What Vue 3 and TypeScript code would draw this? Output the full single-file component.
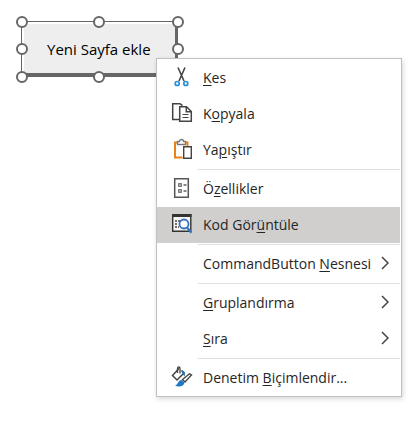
<script setup lang="ts">
type IconName = 'cut' | 'copy' | 'paste' | 'properties' | 'code' | 'format'

interface MenuItem {
  before: string
  key: string
  after: string
  icon?: IconName
  submenu?: boolean
  active?: boolean
}

const groups: MenuItem[][] = [
  [
    { before: '', key: 'K', after: 'es', icon: 'cut' },
    { before: 'K', key: 'o', after: 'pyala', icon: 'copy' },
    { before: 'Ya', key: 'p', after: 'ıştır', icon: 'paste' },
  ],
  [
    { before: 'Ö', key: 'z', after: 'ellikler', icon: 'properties' },
    { before: 'Kod Gör', key: 'ü', after: 'ntüle', icon: 'code', active: true },
  ],
  [{ before: 'CommandButton ', key: 'N', after: 'esnesi', submenu: true }],
  [
    { before: '', key: 'G', after: 'ruplandırma', submenu: true },
    { before: '', key: 'S', after: 'ıra', submenu: true },
  ],
  [{ before: 'Denetim ', key: 'B', after: 'içimlendir...', icon: 'format' }],
]

const handles: string[] = ['nw', 'n', 'ne', 'w', 'e', 'sw', 's', 'se']
</script>

<template>
  <main class="sheet">
    <div class="selection">
      <button type="button" class="command">Yeni Sayfa ekle</button>
      <span v-for="h in handles" :key="h" class="handle" :class="h"></span>
    </div>
    <div class="menu" role="menu">
      <div v-for="(group, g) in groups" :key="g" class="group" role="group">
        <button
          v-for="item in group"
          :key="item.before + item.key + item.after"
          type="button"
          role="menuitem"
          class="item"
          :class="{ active: item.active }"
          :aria-haspopup="item.submenu ? 'menu' : undefined"
        >
          <span class="icon">
            <svg v-if="item.icon" width="22" height="22" viewBox="0 0 22 22" fill="none" aria-hidden="true">
              <g v-if="item.icon === 'cut'">
                <path d="M7 1.500L13 15M14 1.500L8 15" stroke="#444" stroke-width="1.600" />
                <circle cx="6.200" cy="17.500" r="2" stroke="#2b8fd6" stroke-width="1.700" />
                <circle cx="14.800" cy="17.500" r="2" stroke="#2b8fd6" stroke-width="1.700" />
              </g>
              <g v-else-if="item.icon === 'copy'" stroke="#444" stroke-width="1.500">
                <path d="M8.500 17.500H1.700V1.700H9L11.500 3.700" />
                <path d="M8.700 4.700H15.500L20.300 9.500V19.300H8.700Z" fill="#fff" />
                <path d="M15.300 4.700V9.700H20.300" />
                <path d="M11.500 12.500H17.500M11.500 15.500H17.500" stroke-width="1.200" />
              </g>
              <g v-else-if="item.icon === 'paste'">
                <path d="M7 4.500H4V19.500H11.500M13 4.500H16.500V8" stroke="#e8811a" stroke-width="2" />
                <path d="M6.500 6.500V3.500H8.500C8.500 0.800 12.500 0.800 12.500 3.500H14.500V6.500Z" fill="#fff" stroke="#777" stroke-width="1.300" />
                <path d="M12.700 8.700H20.300V20.300H12.700Z" fill="#fff" stroke="#444" stroke-width="1.400" />
              </g>
              <g v-else-if="item.icon === 'properties'">
                <path d="M3.700 1.700H17.300V20.300H3.700Z" fill="#fff" stroke="#555" stroke-width="1.500" />
                <path d="M7.500 6.500H10.500V9.500H7.500ZM7.500 12.500H10.500V15.500H7.500Z" fill="#aaa" stroke="#777" />
                <path d="M12.500 8H15.500M12.500 14H15.500" stroke="#888" stroke-width="2" />
              </g>
              <g v-else-if="item.icon === 'code'">
                <path d="M1.700 1.700H19.800V18.300H1.700Z" fill="#f4f4f4" stroke="#333" stroke-width="1.400" />
                <path d="M1 2.500H20.500" stroke="#333" stroke-width="3" />
                <path d="M4 8H6M7 8H9M4 11H6M4 14H6M7 14H8" stroke="#444" stroke-width="1.500" />
                <path d="M16 14.500L20.500 19.700" stroke="#3574bd" stroke-width="2.200" />
                <circle cx="13" cy="11" r="4.500" fill="#fff" stroke="#3574bd" stroke-width="1.800" />
              </g>
              <g v-else>
                <path d="M8 2.500L1.500 9.500L6 14L13 7L10.500 4.500" fill="#fff" stroke="#444" stroke-width="1.500" />
                <path d="M6.500 7V2.500C6.500 0.500 9 0.500 9 2.500V7.500" stroke="#444" stroke-width="1.300" />
                <path d="M10.500 4.500C13.500 4.500 14.500 7 13.500 10.500L11.500 7.500Z" fill="#1e70b8" />
                <path d="M11.500 13.500L18.500 7.800L20.500 9L14 16Z" fill="#fff" stroke="#444" stroke-width="1.400" />
                <path d="M10.500 14L13.500 16.500C13 20 8.500 21.500 4 19.700C7.500 18.500 6.500 14.500 10.500 14Z" fill="#1e78c8" />
              </g>
            </svg>
          </span>
          <span class="label">{{ item.before }}<u>{{ item.key }}</u>{{ item.after }}</span>
          <svg v-if="item.submenu" class="chevron" width="8" height="14" viewBox="0 0 8 14" fill="none" aria-hidden="true">
            <path d="M1 1L7 7L1 13" stroke="#444" stroke-width="1.500" />
          </svg>
        </button>
      </div>
    </div>
  </main>
</template>

<style>
body {
  background: #fff;
}
</style>

<style scoped>
.sheet {
  position: relative;
  min-height: 100vh;
  box-sizing: border-box;
  padding: 21px;
  font-family: "Open Sans", "Noto Sans", sans-serif;
  color: #262626;
}

.selection {
  position: relative;
  width: fit-content;
}

.command {
  display: block;
  height: 56px;
  box-sizing: border-box;
  padding: 2px 24px 0 25px;
  border: solid #666;
  border-width: 1px 3px 4px 1px;
  background: #eee;
  box-shadow: inset 2px 2px #fff;
  font-family: "Open Sans", "Noto Sans", sans-serif;
  font-size: 15px;
  color: #000;
  white-space: nowrap;
}

.handle {
  position: absolute;
  width: 12px;
  height: 12px;
  box-sizing: border-box;
  border: 2px solid #666;
  border-radius: 50%;
  background: #fff;
  transform: translate(-50%, -50%);
}

.nw, .n, .ne { top: 1px; }
.w, .e { top: 50%; }
.sw, .s, .se { top: 100%; }
.nw, .w, .sw { left: 1px; }
.n, .s { left: 50%; }
.ne, .e, .se { left: 100%; }

.menu {
  position: absolute;
  top: 58px;
  left: 156px;
  right: 16px;
  padding: 1px 1px 0 0;
  border: 1px solid #c0c0c0;
  background: #fff;
  box-shadow: 1px 2px 5px rgba(0, 0, 0, 0.16);
}

.group + .group::before {
  content: "";
  display: block;
  height: 1px;
  margin: 1px 0 1px 41px;
  background: #e0e0e0;
}

.item {
  display: flex;
  align-items: center;
  width: 100%;
  height: 36px;
  padding: 0 11px 2px 14px;
  border: 0;
  background: transparent;
  color: inherit;
  font: inherit;
  font-size: 14px;
  text-align: left;
  white-space: nowrap;
}

.item.active {
  background: #d0cfcd;
}

.icon {
  flex: none;
  width: 32px;
  height: 22px;
}

.icon svg {
  display: block;
}

.label {
  flex: 1;
}

.label u {
  text-decoration-thickness: 1px;
  text-underline-offset: 2px;
}

.chevron {
  flex: none;
}
</style>
